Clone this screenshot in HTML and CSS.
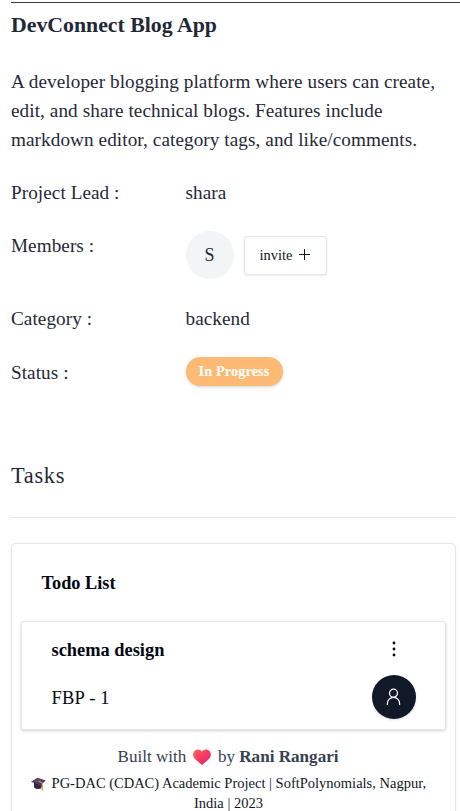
FILE: index.html
```html
<!DOCTYPE html>
<html lang="en">
<head>
<meta charset="utf-8">
<title>DevConnect Blog App</title>
<link rel="stylesheet" href="styles.css">
</head>
<body>
<main class="page">
  <hr class="top-rule">
  <h1 class="title">DevConnect Blog App</h1>
  <p class="description">A developer blogging platform where users can create, edit, and share technical blogs. Features include markdown editor, category tags, and like/comments.</p>
  <dl class="details">
    <dt>Project Lead :</dt>
    <dd>shara</dd>
    <dt>Members :</dt>
    <dd class="members">
      <span class="avatar">S</span>
      <button class="invite">invite
        <svg class="plus" viewBox="0 0 11 11"><path d="M5.500 0v11M0 5.500h11"/></svg>
      </button>
    </dd>
    <dt>Category :</dt>
    <dd>backend</dd>
    <dt class="status-label">Status :</dt>
    <dd><span class="badge">In Progress</span></dd>
  </dl>
  <h2 class="section-title">Tasks</h2>
  <section class="list">
    <h3 class="list-title">Todo List</h3>
    <article class="task">
      <div class="task-text">
        <h4 class="task-name">schema design</h4>
        <p class="task-code">FBP - 1</p>
      </div>
      <div class="task-actions">
        <svg class="dots" viewBox="0 0 4 16"><circle cx="2" cy="2" r="1.4"/><circle cx="2" cy="8" r="1.4"/><circle cx="2" cy="14" r="1.4"/></svg>
        <span class="assignee">
          <svg class="person" viewBox="0 0 15 18"><circle cx="7.5" cy="5.2" r="4"/><path d="M1.4 17v-1.6a6.1 6.1 0 0 1 12.2 0V17"/></svg>
        </span>
      </div>
    </article>
    <footer class="footer">
      <p class="credit">Built with
        <svg class="heart" viewBox="0 0 18 16">
          <defs><linearGradient id="heartFill" x1="0" y1="0" x2="1" y2="1"><stop offset="0" stop-color="#ff6a4d"/><stop offset=".45" stop-color="#f93b62"/><stop offset="1" stop-color="#e0207c"/></linearGradient></defs>
          <path fill="url(#heartFill)" d="M9 2.7C7.2-.2 3.3-.1 1.4 2.1-.5 4.500 0 7.600 1.700 9.600 3.500 11.800 6.600 14 8.300 15.400q.7.600 1.400 0C11.400 14 14.500 11.800 16.300 9.600 18 7.600 18.500 4.500 16.600 2.100 14.700-.1 10.800-.2 9 2.700z"/>
        </svg>
        by <strong>Rani Rangari</strong></p>
      <p class="origin">
        <svg class="cap" viewBox="0 0 15 14">
          <path fill="#30263f" d="M3 5.500v5q4 3 8 0V6z"/>
          <path fill="#4b3b60" d="M0 4.800 6.500.7 14.800 3.500 9.300 8.600z"/>
          <path fill="#66517d" d="m3 4.500 4-2.300 4 1.300-3.500 2z"/>
          <path fill="none" stroke="#e08b45" stroke-width="1.200" d="M8 4.200 11.200 6v4.500"/>
          <path fill="#f0a14e" d="M10.400 9.500h1.800v4.300l-2-1.200z"/>
        </svg>
        PG-DAC (CDAC) Academic Project | SoftPolynomials, Nagpur,<br>India | 2023</p>
    </footer>
  </section>
</main>
</body>
</html>
```
FILE: styles.css
```css
* { box-sizing: border-box; margin: 0; padding: 0; }

html, body { height: 811px; overflow: hidden; }

body {
  background: #fff;
  color: #1f2937;
  font: 19.2px/29px "Liberation Serif", "Times New Roman", serif;
}

.page { padding: 2px 0 0 11px; }

.top-rule { height: 1px; border: 0; background: #3a3a3e; }

.title {
  margin-top: 8px;
  font-size: 21.8px;
  line-height: 29px;
  font-weight: 700;
}

.description {
  width: 440px;
  margin-top: 26.5px;
  letter-spacing: .08px;
}

.details {
  display: grid;
  grid-template-columns: 174.5px 1fr;
  row-gap: 24.5px;
  margin-top: 24px;
  letter-spacing: .06px;
}

.members { display: flex; align-items: center; height: 48px; }

.status-label { padding-top: 1px; }

.avatar {
  display: grid;
  place-items: center;
  width: 48px;
  height: 48px;
  border-radius: 50%;
  background: #f3f4f6;
  font-size: 18px;
}

.invite {
  display: flex;
  align-items: center;
  gap: 7px;
  width: 83px;
  height: 39px;
  margin-left: 10.5px;
  padding: 0 0 1px 14.5px;
  border: 1px solid #e5e7eb;
  border-radius: 3px;
  background: #fff;
  box-shadow: 0 1px 2px rgba(0, 0, 0, .08);
  color: #111827;
  font: 14.4px/20px "Liberation Serif", serif;
}

.plus { width: 11px; height: 11px; fill: none; stroke: #111827; stroke-width: 1; }

.badge {
  display: block;
  width: 97px;
  height: 29px;
  margin-top: .4px;
  border-radius: 15px;
  background: #fdba74;
  box-shadow: 0 1px 3px rgba(0, 0, 0, .18);
  color: #fff;
  font-size: 14.4px;
  font-weight: 700;
  line-height: 28px;
  letter-spacing: .05px;
  text-align: center;
}

.section-title {
  height: 57px;
  margin: 74px 4px 0 0;
  border-bottom: 1px solid #e5e7eb;
  font-size: 22.4px;
  font-weight: 400;
  line-height: 30px;
  letter-spacing: .7px;
}

.list {
  width: 445px;
  height: 300px;
  margin-top: 24.5px;
  padding: 25px 9.5px 0;
  border: 1px solid #e5e7eb;
  border-radius: 5px;
  box-shadow: 0 0 2px rgba(0, 0, 0, .08);
  color: #030712;
}

.list-title { margin-left: 20px; font-size: 18.3px; line-height: 29px; }

.task {
  display: flex;
  justify-content: space-between;
  width: 425px;
  height: 109px;
  margin: 23px 0 0 -.5px;
  padding: 14px 29px 0 29.5px;
  border: 1px solid #e5e7eb;
  border-radius: 3px;
  box-shadow: 0 1px 3px rgba(0, 0, 0, .18);
}

.task-name { font-size: 18.4px; line-height: 29px; }

.task-code { margin-top: 19px; font-size: 18.5px; letter-spacing: .2px; }

.task-actions { display: flex; flex-direction: column; align-items: center; width: 45px; }

.dots { width: 4px; height: 16px; margin-top: 5px; fill: #030712; }

.assignee {
  display: grid;
  place-items: center;
  width: 44px;
  height: 44px;
  margin-top: 18px;
  border-radius: 50%;
  background: #111827;
  box-shadow: 0 1px 2px rgba(0, 0, 0, .15);
}

.person { width: 15px; height: 18px; fill: none; stroke: #fff; stroke-width: 1.2; }

.footer { width: 425px; margin: 15px 0 0 -6px; text-align: center; white-space: nowrap; }

.credit { color: #374151; font-size: 17.1px; line-height: 24px; }

.heart { width: 18px; height: 16px; margin: 0 3px 0 2px; vertical-align: -3px; }

.origin { margin-top: 4px; margin-left: 1px; color: #111827; font-size: 14.5px; line-height: 20px; }

.cap { width: 15px; height: 14px; margin-right: 2px; vertical-align: -3px; }
```
